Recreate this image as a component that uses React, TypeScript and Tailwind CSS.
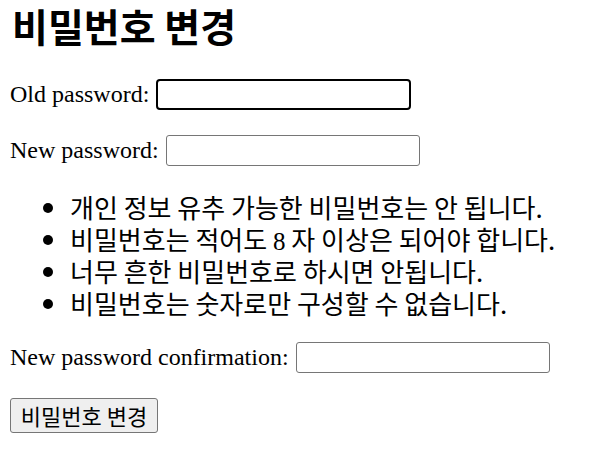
import React from "react";

const serif = "font-['Liberation_Serif','Noto_Sans_CJK_KR',serif]";

export default function App() {
  return (
    <div className={`${serif} bg-white text-black min-h-[466px] w-[604px] px-[10px] text-[24px]`}>
      <h2 className="ml-[2px] h-[50px] leading-[50px] text-[39px] font-bold font-['Noto_Sans_CJK_KR',sans-serif]">
        비밀번호 변경
      </h2>
      <form className="flex flex-col">
        <div className="mt-[28px] flex h-[32px] items-center gap-[7px]">
          <label className="leading-[32px]">Old password:</label>
          <input
            type="password"
            className="box-border h-[31px] w-[255px] rounded-[4px] border-2 border-black bg-white"
          />
        </div>
        <div className="mt-[24px] flex h-[32px] items-center gap-[7px]">
          <label className="leading-[32px]">New password:</label>
          <input
            type="password"
            className="box-border h-[31px] w-[254px] rounded-[3px] border border-[#767676] bg-white"
          />
        </div>
        <ul className="mt-[25px] list-disc pl-[60px] text-[26px] leading-[32px] font-['Noto_Sans_CJK_KR',sans-serif]">
          <li className="h-[32px]">개인 정보 유추 가능한 비밀번호는 안 됩니다.</li>
          <li className="h-[32px]">
            비밀번호는 적어도 <span className="font-['Liberation_Serif',serif] text-[25px] leading-none">8</span> 자 이상은 되어야 합니다.
          </li>
          <li className="h-[32px]">너무 흔한 비밀번호로 하시면 안됩니다.</li>
          <li className="h-[32px]">비밀번호는 숫자로만 구성할 수 없습니다.</li>
        </ul>
        <div className="mt-[22px] flex h-[32px] items-center gap-[7px]">
          <label className="leading-[32px]">New password confirmation:</label>
          <input
            type="password"
            className="box-border h-[31px] w-[254px] rounded-[3px] border border-[#767676] bg-white"
          />
        </div>
        <div className="mt-[25px]">
          <button
            type="button"
            className="box-border h-[35px] w-[148px] rounded-[3px] border border-[#767676] bg-[#efefef] text-[22px] leading-[33px] font-['Noto_Sans_CJK_KR',sans-serif]"
          >
            비밀번호 변경
          </button>
        </div>
      </form>
    </div>
  );
}
